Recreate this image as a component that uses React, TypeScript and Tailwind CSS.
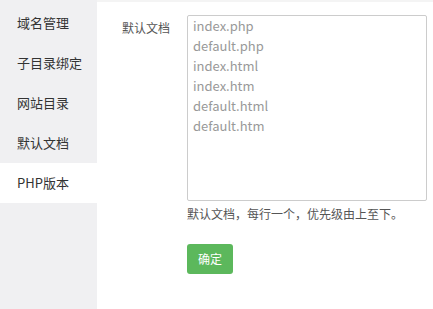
import React from "react";

const menu = ["域名管理", "子目录绑定", "网站目录", "默认文档", "PHP版本"];
const docs = "index.php\ndefault.php\nindex.html\nindex.htm\ndefault.html\ndefault.htm";

export default function App() {
  return (
    <div
      className="flex w-[433px] h-[309px] bg-white overflow-hidden"
      style={{ fontFamily: '"Noto Sans CJK SC", "Noto Sans", sans-serif' }}
    >
      {/* 左侧菜单 */}
      <div className="w-[97px] h-full bg-[#f0f0f2] flex flex-col pt-[3px]">
        {menu.map((m, i) => (
          <div
            key={m}
            className={`h-10 flex items-center pl-[17px] text-[13px] text-[#333] ${
              i === 4 ? "bg-white" : ""
            }`}
          >
            {m}
          </div>
        ))}
      </div>

      {/* 右侧内容 */}
      <div className="flex-1 border-t-2 border-[#f4f4f4] pt-[13px]">
        <div className="flex">
          <div className="w-[90px] pl-[25px] pt-[4px] text-[12px] text-[#555]">默认文档</div>
          <div className="flex flex-col">
            <textarea
              defaultValue={docs}
              className="w-[240px] h-[186px] border border-[#ccc] rounded-[2px] px-[5px] pt-0 text-[13px] leading-[20px] text-[#999] resize-none outline-none"
              style={{ fontFamily: '"Noto Sans CJK SC", "Noto Sans", sans-serif' }}
            />
            <div className="mt-[3px] text-[12px] leading-[20px] text-[#555]">
              默认文档，每行一个，优先级由上至下。
            </div>
            <button className="mt-[20px] w-[46px] h-[30px] rounded-[3px] bg-[#5cb85c] text-white text-[12px]">
              确定
            </button>
          </div>
        </div>
      </div>
    </div>
  );
}
